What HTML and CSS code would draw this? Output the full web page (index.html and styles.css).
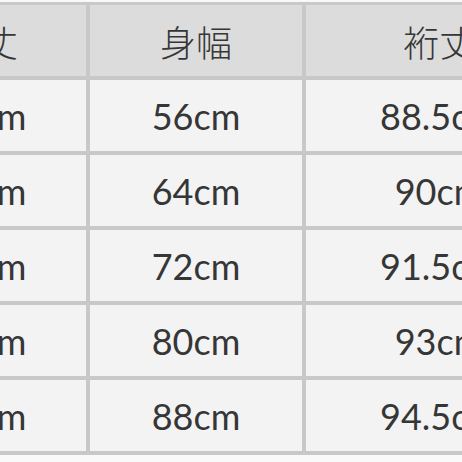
FILE: index.html
```html
<!DOCTYPE html>
<html lang="ja">
<head>
<meta charset="utf-8">
<link rel="stylesheet" href="styles.css">
</head>
<body>
<div class="viewport">
  <div class="size-table">
    <div class="cell head">着丈</div>
    <div class="cell head">身幅</div>
    <div class="cell head">裄丈</div>

    <div class="cell">68cm</div>
    <div class="cell">56cm</div>
    <div class="cell">88.5cm</div>

    <div class="cell">70cm</div>
    <div class="cell">64cm</div>
    <div class="cell">90cm</div>

    <div class="cell">72cm</div>
    <div class="cell">72cm</div>
    <div class="cell">91.5cm</div>

    <div class="cell">74cm</div>
    <div class="cell">80cm</div>
    <div class="cell">93cm</div>

    <div class="cell">76cm</div>
    <div class="cell">88cm</div>
    <div class="cell">94.5cm</div>
  </div>
</div>
</body>
</html>
```
FILE: styles.css
```css
html, body {
  margin: 0;
  padding: 0;
  background: #f9f9f9;
}
.viewport {
  width: 462px;
  height: 462px;
  overflow: hidden;
  padding-top: 2px;
  box-sizing: border-box;
}
.size-table {
  display: grid;
  grid-template-columns: 208px 212px 266px;
  grid-auto-rows: 71px;
  gap: 4px;
  padding: 3px 0 4px 0;
  margin-left: -122px;
  width: max-content;
  background: #c8c8c8;
}
.cell {
  display: flex;
  align-items: center;
  justify-content: center;
  background: #f3f3f3;
  color: #363636;
  font-family: Lato, "Noto Sans CJK JP", sans-serif;
  font-size: 36px;
}
.cell.head {
  background: #dcdcdc;
  font-family: "Noto Sans CJK JP", sans-serif;
  font-weight: 300;
  color: #363636;
}
```
